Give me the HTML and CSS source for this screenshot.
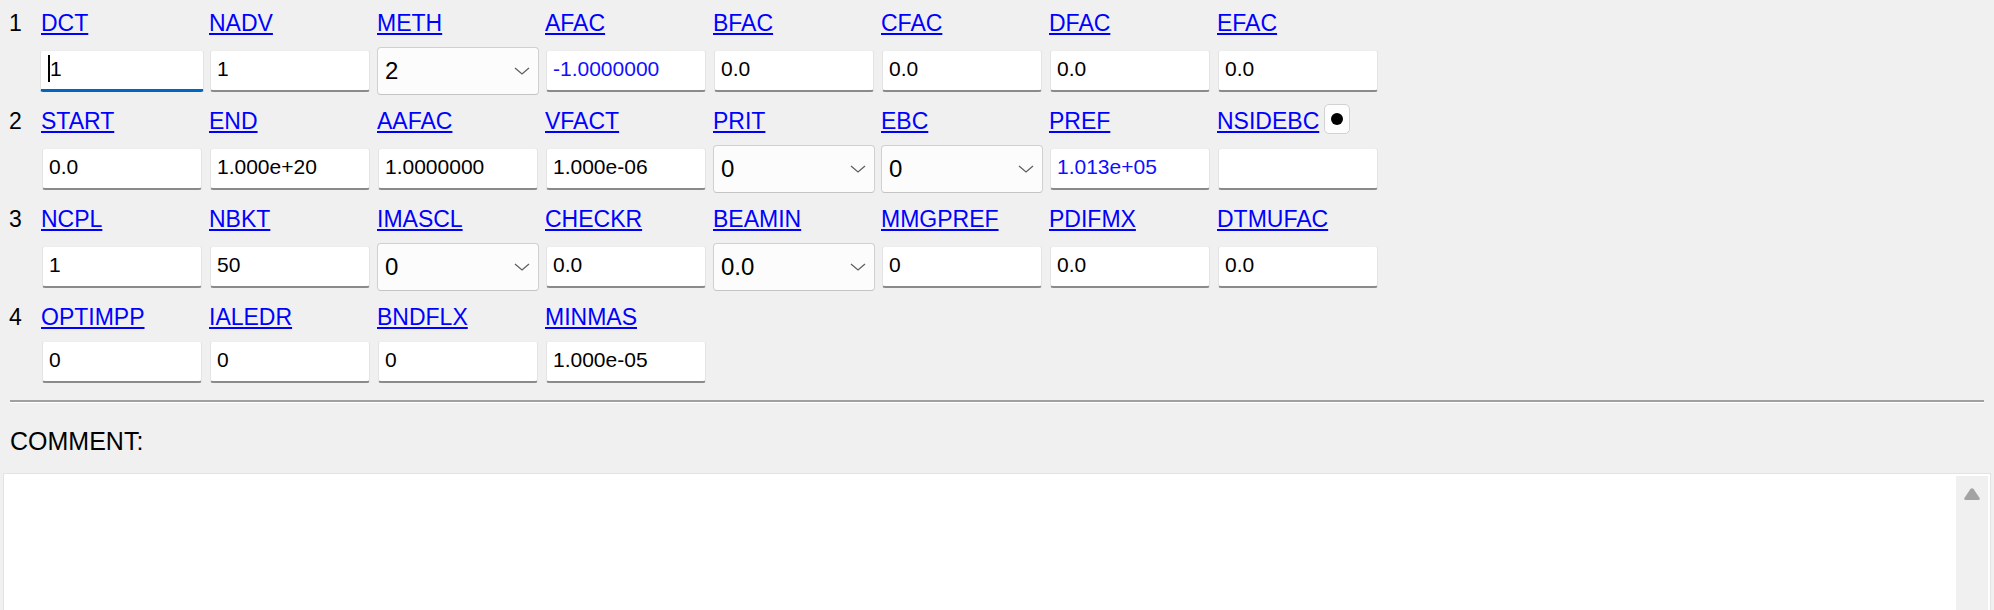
FILE: index.html
```html
<!DOCTYPE html>
<html>
<head>
<meta charset="utf-8">
<title>Parameters</title>
<link rel="stylesheet" href="styles.css">
</head>
<body>
<main class="params">
  <section class="row">
    <span class="num">1</span>
    <a class="lbl" href="#">DCT</a>
    <a class="lbl" href="#">NADV</a>
    <a class="lbl" href="#">METH</a>
    <a class="lbl" href="#">AFAC</a>
    <a class="lbl" href="#">BFAC</a>
    <a class="lbl" href="#">CFAC</a>
    <a class="lbl" href="#">DFAC</a>
    <a class="lbl" href="#">EFAC</a>
    <span></span>
    <div class="field focus"><span class="caret"></span>1</div>
    <div class="field">1</div>
    <div class="combo"><span>2</span><svg class="chev" width="16" height="8" viewBox="0 0 16 8"><polyline points="1,1 8,7 15,1" fill="none" stroke="#606060" stroke-width="1.3"/></svg></div>
    <div class="field blue">-1.0000000</div>
    <div class="field">0.0</div>
    <div class="field">0.0</div>
    <div class="field">0.0</div>
    <div class="field">0.0</div>
  </section>

  <section class="row">
    <span class="num">2</span>
    <a class="lbl" href="#">START</a>
    <a class="lbl" href="#">END</a>
    <a class="lbl" href="#">AAFAC</a>
    <a class="lbl" href="#">VFACT</a>
    <a class="lbl" href="#">PRIT</a>
    <a class="lbl" href="#">EBC</a>
    <a class="lbl" href="#">PREF</a>
    <div class="lblwrap"><a class="lbl" href="#">NSIDEBC</a><button class="dotbtn" type="button"><span class="dot"></span></button></div>
    <span></span>
    <div class="field">0.0</div>
    <div class="field">1.000e+20</div>
    <div class="field">1.0000000</div>
    <div class="field">1.000e-06</div>
    <div class="combo"><span>0</span><svg class="chev" width="16" height="8" viewBox="0 0 16 8"><polyline points="1,1 8,7 15,1" fill="none" stroke="#606060" stroke-width="1.3"/></svg></div>
    <div class="combo"><span>0</span><svg class="chev" width="16" height="8" viewBox="0 0 16 8"><polyline points="1,1 8,7 15,1" fill="none" stroke="#606060" stroke-width="1.3"/></svg></div>
    <div class="field blue">1.013e+05</div>
    <div class="field"></div>
  </section>

  <section class="row">
    <span class="num">3</span>
    <a class="lbl" href="#">NCPL</a>
    <a class="lbl" href="#">NBKT</a>
    <a class="lbl" href="#">IMASCL</a>
    <a class="lbl" href="#">CHECKR</a>
    <a class="lbl" href="#">BEAMIN</a>
    <a class="lbl" href="#">MMGPREF</a>
    <a class="lbl" href="#">PDIFMX</a>
    <a class="lbl" href="#">DTMUFAC</a>
    <span></span>
    <div class="field">1</div>
    <div class="field">50</div>
    <div class="combo"><span>0</span><svg class="chev" width="16" height="8" viewBox="0 0 16 8"><polyline points="1,1 8,7 15,1" fill="none" stroke="#606060" stroke-width="1.3"/></svg></div>
    <div class="field">0.0</div>
    <div class="combo"><span>0.0</span><svg class="chev" width="16" height="8" viewBox="0 0 16 8"><polyline points="1,1 8,7 15,1" fill="none" stroke="#606060" stroke-width="1.3"/></svg></div>
    <div class="field">0</div>
    <div class="field">0.0</div>
    <div class="field">0.0</div>
  </section>

  <section class="row">
    <span class="num">4</span>
    <a class="lbl" href="#">OPTIMPP</a>
    <a class="lbl" href="#">IALEDR</a>
    <a class="lbl" href="#">BNDFLX</a>
    <a class="lbl" href="#">MINMAS</a>
    <span></span><span></span><span></span><span></span>
    <span></span>
    <div class="field">0</div>
    <div class="field">0</div>
    <div class="field">0</div>
    <div class="field">1.000e-05</div>
  </section>
</main>

<hr class="sep">

<label class="cmt-label">COMMENT:</label>
<div class="comment-box">
  <div class="comment-text"></div>
  <div class="scrollbar">
    <svg width="16" height="12" viewBox="0 0 16 12"><path d="M6.3 1.2 Q8 -0.8 9.7 1.2 L15.6 10 Q16.4 12 14.2 12 L1.8 12 Q-0.4 12 0.4 10 Z" fill="#a3a3a3"/></svg>
  </div>
</div>
</body>
</html>
```

FILE: styles.css
```css
html, body {
  margin: 0;
  padding: 0;
  overflow: hidden;
}

body {
  background: #f0f0f0;
  height: 610px;
  font-family: "Liberation Sans", Arial, sans-serif;
  color: #000;
}

.params {
  padding: 10px 0 0 8px;
}

.row {
  display: grid;
  grid-template-columns: 27px repeat(8, 162px);
  grid-template-rows: 26px auto;
  column-gap: 6px;
  row-gap: 11px;
  align-items: center;
  margin-bottom: 13px;
}

.row:last-child {
  margin-bottom: 0;
}

.num {
  font-size: 23px;
  line-height: 26px;
  padding-left: 1px;
}

.lbl {
  justify-self: start;
  font-size: 23px;
  line-height: 26px;
  color: #0000ff;
  text-decoration: underline;
  text-decoration-thickness: 2px;
  text-underline-offset: 2px;
}

.lblwrap {
  display: flex;
  align-items: flex-start;
  gap: 5px;
  height: 26px;
}

.dotbtn {
  box-sizing: border-box;
  width: 26px;
  height: 30px;
  margin-top: -4px;
  padding: 0;
  background: #fdfdfd;
  border: 1px solid #d2d2d2;
  border-radius: 5px;
  display: flex;
  align-items: center;
  justify-content: center;
}

.dot {
  width: 12px;
  height: 12px;
  border-radius: 50%;
  background: #000;
}

.field {
  box-sizing: border-box;
  width: 160px;
  height: 42px;
  margin-left: 1px;
  background: #fff;
  border: 1px solid #e4e4e4;
  border-top-color: #ededed;
  border-bottom: 2px solid #8a8a8a;
  border-radius: 3px;
  padding: 0 6px 3px 6px;
  font-size: 21px;
  display: flex;
  align-items: center;
  white-space: nowrap;
}

.field.blue {
  color: #1010ff;
}

.field.focus {
  width: 164px;
  margin-left: -1px;
  padding-left: 7px;
  border-bottom: 3px solid #0067c0;
}

.caret {
  display: inline-block;
  width: 2px;
  height: 27px;
  background: #000;
}

.combo {
  box-sizing: border-box;
  width: 162px;
  height: 48px;
  background: #fcfcfc;
  border: 1px solid #d0d0d0;
  border-bottom-color: #c4c4c4;
  border-radius: 4px;
  padding: 0 8px 0 7px;
  font-size: 24px;
  display: flex;
  align-items: center;
  justify-content: space-between;
}

.chev {
  display: block;
}

.sep {
  height: 2px;
  margin: 17px 10px 0 10px;
  border: 0;
  border-bottom: 1px solid #ffffff;
  background: #a0a0a0;
}

.cmt-label {
  display: block;
  margin-top: 23px;
  padding-left: 10px;
  font-size: 25px;
  line-height: 30px;
}

.comment-box {
  box-sizing: border-box;
  margin: 17px 3px 0 3px;
  height: 137px;
  background: #fff;
  border: 1px solid #e3e3e3;
  border-bottom: 0;
  padding: 2px 2px 0 0;
  display: flex;
}

.comment-text {
  flex: 1;
}

.scrollbar {
  width: 32px;
  background: #f0f0f0;
  display: flex;
  justify-content: center;
  align-items: flex-start;
  padding-top: 12px;
}

.scrollbar svg {
  display: block;
}
```
